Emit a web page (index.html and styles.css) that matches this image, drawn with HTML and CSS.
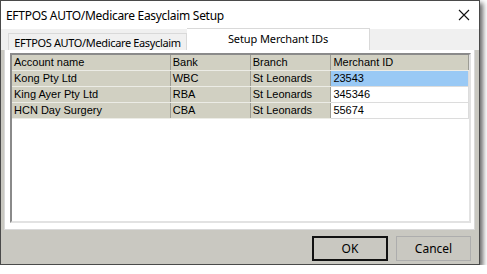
FILE: index.html
```html
<!DOCTYPE html>
<html lang="en">
<head>
  <meta charset="utf-8" />
  <title>EFTPOS AUTO/Medicare Easyclaim Setup</title>
  <link rel="stylesheet" href="styles.css">
</head>
<body>

  <div class="window">
    <div class="titlebar">
      <span class="title">EFTPOS AUTO/Medicare Easyclaim Setup</span>
      <svg class="close" width="12" height="12" viewBox="0 0 12 12">
        <path d="M1 1 L11 11 M11 1 L1 11" stroke="#111" stroke-width="1.1" fill="none" />
      </svg>
    </div>

    <div class="tabs">
      <div class="tab">EFTPOS AUTO/Medicare Easyclaim</div>
      <div class="tab active">Setup Merchant IDs</div>
    </div>

    <div class="panel">
      <div class="grid">
        <table>
          <tr>
            <td class="c1">Account name</td>
            <td class="c2">Bank</td>
            <td class="c3">Branch</td>
            <td class="c4 fixed">Merchant ID</td>
          </tr>
          <tr>
            <td>Kong Pty Ltd</td>
            <td>WBC</td>
            <td>St Leonards</td>
            <td class="edit selected">23543</td>
          </tr>
          <tr>
            <td>King Ayer Pty Ltd</td>
            <td>RBA</td>
            <td>St Leonards</td>
            <td class="edit">345346</td>
          </tr>
          <tr>
            <td>HCN Day Surgery</td>
            <td>CBA</td>
            <td>St Leonards</td>
            <td class="edit">55674</td>
          </tr>
        </table>
      </div>
    </div>

    <div class="footer">
      <button class="btn default">OK</button>
      <button class="btn">Cancel</button>
    </div>
  </div>

</body>
</html>
```

FILE: styles.css
```css
body {
  margin: 0;
  background: #fff;
  font-family: "Noto Sans", sans-serif;
  color: #000;
}

.window {
  width: 478px;
  height: 263px;
  border: 1px solid #4a4a4a;
  background: #c9c8c1;
  display: flex;
  flex-direction: column;
  box-shadow: 3px 3px 5px rgba(0, 0, 0, 0.6);
}

.titlebar {
  height: 28px;
  background: #fff;
  display: flex;
  align-items: center;
  justify-content: space-between;
  padding: 0 9px 0 5px;
  font-size: 12px;
  letter-spacing: -0.3px;
}

.close {
  display: block;
}

.tabs {
  height: 21px;
  background: #f0f0f0;
  display: flex;
  align-items: flex-end;
  padding-left: 7px;
  font-size: 11px;
  letter-spacing: -0.35px;
  white-space: nowrap;
}

.tab {
  height: 16px;
  line-height: 17px;
  border: 1px solid #d9d9d9;
  border-bottom: none;
  background: #f0f0f0;
  width: 177px;
  text-align: center;
}

.tab.active {
  height: 21px;
  line-height: 20px;
  width: 182px;
  background: #fff;
  border-left: none;
  letter-spacing: -0.1px;
}

.panel {
  height: 172px;
  margin: 0 4px 0 3px;
  background: #fff;
  border: 1px solid #d9d9d9;
  border-top: none;
  padding: 3px 3px 4px 5px;
}

.grid {
  height: 166px;
  border: 2px solid;
  border-color: #8a8a8a #e2e2e2 #e2e2e2 #8a8a8a;
  background: #fff;
  font-family: "Liberation Sans", Arial, sans-serif;
  font-size: 11px;
}

table {
  border-collapse: collapse;
  table-layout: fixed;
}

td {
  height: 15px;
  padding: 0 0 0 2px;
  background: #d1d0c2;
  border-right: 1px solid #9c9c94;
  border-bottom: 1px solid #ecece6;
  white-space: nowrap;
  line-height: 15px;
}

.c1 { width: 157px; }
.c2 { width: 78px; }
.c3 { width: 78px; }
.c4 { width: 136px; }

td.edit {
  background: #fff;
  border-right: 1px solid #dcdcdc;
  border-bottom: 1px solid #dcdcdc;
}

td.selected {
  background: #99c9f5;
}

.footer {
  flex: 1;
  display: flex;
  justify-content: flex-end;
  align-items: flex-start;
  gap: 8px;
  padding: 6px 8px 0 0;
}

.btn {
  width: 75px;
  height: 25px;
  background: #c9c8c1;
  border: 1px solid #adadad;
  font-family: "Noto Sans", sans-serif;
  font-size: 12px;
  color: #000;
  padding: 0;
}

.btn.default {
  border: 2px solid #111;
  width: 76px;
}
```
